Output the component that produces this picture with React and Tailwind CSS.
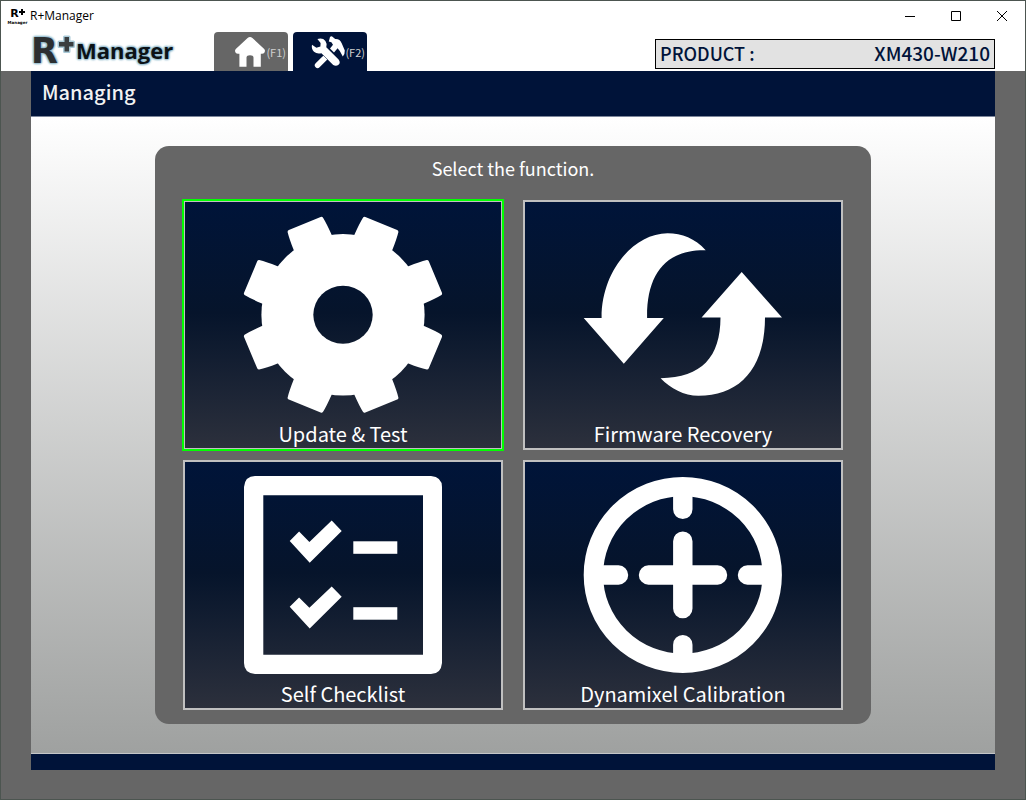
import React from "react";

function Gear() {
  return (
    <svg viewBox="0 0 200 200" className="h-[200px] w-[200px]" fill="#fff" aria-hidden="true">
      <defs>
        <mask id="gear-hole">
          <rect width="200" height="200" fill="#fff" />
          <ellipse cx="100" cy="99.8" rx="29.7" ry="29" fill="#000" />
        </mask>
      </defs>
      <g mask="url(#gear-hole)">
        <ellipse cx="100" cy="99.8" rx="81.6" ry="80.8" />
        <g transform="translate(100 99.8) scale(1.012 1)">
          {[22.5, 67.5, 112.5, 157.5, 202.5, 247.5, 292.5, 337.5].map((a) => (
            <path
              key={a}
              transform={`rotate(${a})`}
              d="M-20.2 -70 L-20.2 -79 Q-20 -90 -18.9 -97.5 Q-18.4 -98.8 -17 -98.8 L17 -98.8 Q18.4 -98.8 18.9 -97.5 Q20 -90 20.2 -79 L20.2 -70 Z"
            />
          ))}
        </g>
      </g>
    </svg>
  );
}

function RecoveryArrows() {
  return (
    <svg viewBox="0 0 200 200" className="h-[200px] w-[200px]" fill="#fff" aria-hidden="true">
      <path d="M122.7 35.2 C112 23.5 99 18.3 84.5 18.3 C50 18.5 18.3 57 18.6 103 L0.7 103 L40.8 148.7 L80.8 103 L64.1 103 C63.5 60 82 34.5 122.7 35.2 Z" />
      <path d="M158.7 57 L199 102.5 L182 102.5 C182 153 157 180.7 115.5 180.7 C101 180.7 87.5 173.5 77.6 163.2 C119 162.5 137.3 142 137.5 102.5 L118.6 102.5 Z" />
    </svg>
  );
}

function Checklist() {
  const check = "M46.7 66 L56.1 56.6 L66.4 67 L88.7 45.6 L98.7 56 L66.7 87.8 Z";
  return (
    <svg viewBox="0 0 200 200" className="h-[200px] w-[200px]" fill="#fff" aria-hidden="true">
      <path
        fillRule="evenodd"
        d="M12 1 H188 Q199 2 199 12 V188 Q198 199 188 199 H12 Q1 198 1 188 V12 Q2 1 12 1 Z M20.3 20.3 V179.7 H180 V20.3 Z"
      />
      <path d={check} />
      <path d={check} transform="translate(0 65.8)" />
      <rect x="110.3" y="66.3" width="44" height="12.5" />
      <rect x="110.3" y="132.2" width="44" height="12.5" />
    </svg>
  );
}

function Crosshair() {
  return (
    <svg viewBox="0 0 200 200" className="h-[200px] w-[200px]" fill="none" stroke="#fff" strokeWidth="19.4" strokeLinecap="round" aria-hidden="true">
      <ellipse cx="99.8" cy="99.9" rx="89.4" ry="88.3" />
      <path d="M65.5 100 H134.5 M99.8 66.2 V133.6" />
      <path d="M99.8 14 V34.3 M99.8 169.7 V186 M14 100 H35.5 M164.5 100 H186" />
    </svg>
  );
}

function HomeIcon() {
  return (
    <svg viewBox="0 0 32 32" className="h-8 w-8" fill="#fff" aria-hidden="true">
      <path d="M13.6 2 Q16 0.2 18.4 2 L30.2 13 Q31.6 14.6 30.5 16.4 Q29.6 17.8 28 17.8 H26.8 V30.8 H19.5 V21.5 Q19.3 19.2 16 19.2 Q12.7 19.2 12.5 21.5 V30.8 H5.4 V17.8 H4 Q2.4 17.8 1.5 16.4 Q0.4 14.6 1.8 13 Z" />
    </svg>
  );
}

function ToolsIcon() {
  return (
    <svg viewBox="0 0 34 34" className="h-[34px] w-[34px]" fill="#fff" aria-hidden="true">
      <path d="M6.6 30.2 L13.4 23.6" stroke="#fff" strokeWidth="5.6" strokeLinecap="round" />
      <path d="M17.8 6.4 L19 2 Q20.4 0.4 21.8 2 L24.2 4 Q28.8 3.6 30.8 8.4 L33.8 15.6 Q34 19.4 31.8 21.6 L28.8 16 L26.6 13.2 L23 17.4 L19 13.6 L22 9.8 L20.4 7.2 Z" />
      <path
        stroke="#001339"
        strokeWidth="1"
        paintOrder="stroke"
        d="M1 9.8 L5.4 12.8 L9.4 11.4 L9.6 8 L6.4 4 Q11.8 2.6 14.4 6 Q16.4 8.8 15.3 12.2 L27.6 24.4 Q29.8 27.2 27.8 29.6 Q25 31.8 22.2 30 L10.4 18.2 Q6 19.4 3 16.8 Q0.1 13.8 1 9.8 Z"
      />
    </svg>
  );
}

function Tab({ hotkey, label, active, children }) {
  return (
    <button
      type="button"
      aria-label={label}
      className={
        "flex h-[39px] w-[74px] items-center justify-end rounded-t " +
        (active ? "bg-[#001339]" : "bg-[#666666]")
      }
    >
      {children}
      <span className="pr-0.5 text-[11px] leading-4 text-[#d0d0d0]">{hotkey}</span>
    </button>
  );
}

function Tile({ label, selected, children }) {
  return (
    <button
      type="button"
      className={
        "flex h-[250px] flex-col items-center border-2 border-[#c0c0c0] bg-linear-to-b from-[#001439] via-[#06142b] via-45% to-[#2c303c] pt-[13px] " +
        (selected ? "outline-2 -outline-offset-1 outline-[#00ff00]" : "")
      }
    >
      {children}
      <span className="mt-[5px] text-[20px] leading-7 text-white">{label}</span>
    </button>
  );
}

const glow =
  "[text-shadow:0_0_2px_#8fb9cc,0_0_2px_#8fb9cc,0_0_2px_#8fb9cc,0_0_3px_#8fb9cc,0_0_3px_#8fb9cc]";

function LogoPlus() {
  return (
    <svg viewBox="0 0 18 20" className="h-5 w-[18px] overflow-visible" aria-hidden="true">
      <path
        d="M6.5 3 H11 V8 H15.5 V12.5 H11 V17.5 H6.5 V12.5 H1 V8 H6.5 Z"
        fill="#3a3e40"
        stroke="#a9cad8"
        strokeWidth="3"
        strokeLinejoin="round"
        paintOrder="stroke"
      />
    </svg>
  );
}

export default function App() {
  return (
    <div className="flex min-h-screen flex-col border border-[#4c5550] bg-[#666666] font-['Noto_Sans_CJK_KR','Noto_Sans',sans-serif]">
      <header className="bg-white">
        <div className="flex h-[30px] items-center justify-between">
          <div className="flex items-center gap-1 pl-2">
            <div className="flex w-[17px] flex-col items-center font-['DejaVu_Sans',sans-serif] font-bold text-black" aria-hidden="true">
              <span className="flex items-start">
                <span className="text-[11px] leading-3">R</span>
                <svg viewBox="0 0 6 6" className="mt-px h-1.5 w-1.5">
                  <path d="M3 0 V6 M0 3 H6" stroke="#000" strokeWidth="2" />
                </svg>
              </span>
              <span className="text-[4px] leading-[5px]">Manager</span>
            </div>
            <span className="font-['Open_Sans',sans-serif] text-[12px] leading-4 text-black">R+Manager</span>
          </div>
          <div className="flex">
            <button type="button" aria-label="Minimize" className="flex h-7 w-[46px] items-center justify-center">
              <svg viewBox="0 0 10 10" className="h-2.5 w-2.5"><path d="M0 5.5 H10" stroke="#000" /></svg>
            </button>
            <button type="button" aria-label="Maximize" className="flex h-7 w-[46px] items-center justify-center">
              <svg viewBox="0 0 10 10" className="h-2.5 w-2.5"><path d="M.5 .5 H9.5 V9.5 H.5 Z" stroke="#000" fill="none" /></svg>
            </button>
            <button type="button" aria-label="Close" className="flex h-7 w-[46px] items-center justify-center">
              <svg viewBox="0 0 10 10" className="h-2.5 w-2.5"><path d="M0 0 L10 10 M10 0 L0 10" stroke="#000" /></svg>
            </button>
          </div>
        </div>
        <div className="flex h-10 items-end justify-between px-[30px]">
          <div className="flex items-end">
            <h1 className={"flex h-10 w-[183px] items-start pt-px font-bold " + glow} aria-label="R+Manager">
              <span className="font-['DejaVu_Sans',sans-serif] text-[35px] leading-[38px] text-[#2c2f31]">R</span>
              <span className="pt-0.5"><LogoPlus /></span>
              <span className="font-['Open_Sans',sans-serif] text-[22px] leading-9 text-[#0c1216]">Manager</span>
            </h1>
            <nav className="flex gap-[5px]">
              <Tab hotkey="(F1)" label="Home (F1)"><HomeIcon /></Tab>
              <Tab hotkey="(F2)" label="Managing (F2)" active><ToolsIcon /></Tab>
            </nav>
          </div>
          <div className="mb-0.5 flex h-[30px] w-[340px] items-start justify-between border border-black bg-[#e2e2e2] px-1 leading-[26px] font-medium text-[#001339]">
            <span className="text-[18px]">PRODUCT :</span>
            <span className="text-[19px]">XM430-W210</span>
          </div>
        </div>
      </header>

      <div className="mx-[30px] mb-[29px] flex flex-1 flex-col">
        <div className="h-[46px] border-b border-[#7c869b] bg-[#001339] pl-[11px]">
          <h2 className="text-[20px] leading-[42px] font-medium text-[#f2f2f2]">Managing</h2>
        </div>
        <main className="flex flex-1 items-center justify-center bg-linear-to-b from-white to-[#9fa1a0]">
          <section className="w-full max-w-[716px] rounded-[14px] bg-[#666666] px-7 pb-3.5">
            <p className="pt-0.5 pb-3 text-center text-[18px] leading-10 text-white">Select the function.</p>
            <div className="grid grid-cols-2 gap-x-5 gap-y-2.5">
              <Tile label="Update & Test" selected><Gear /></Tile>
              <Tile label="Firmware Recovery"><RecoveryArrows /></Tile>
              <Tile label="Self Checklist"><Checklist /></Tile>
              <Tile label="Dynamixel Calibration"><Crosshair /></Tile>
            </div>
          </section>
        </main>
        <footer className="h-[17px] border-t border-[#c4c6c8] bg-[#001339]" />
      </div>
    </div>
  );
}
